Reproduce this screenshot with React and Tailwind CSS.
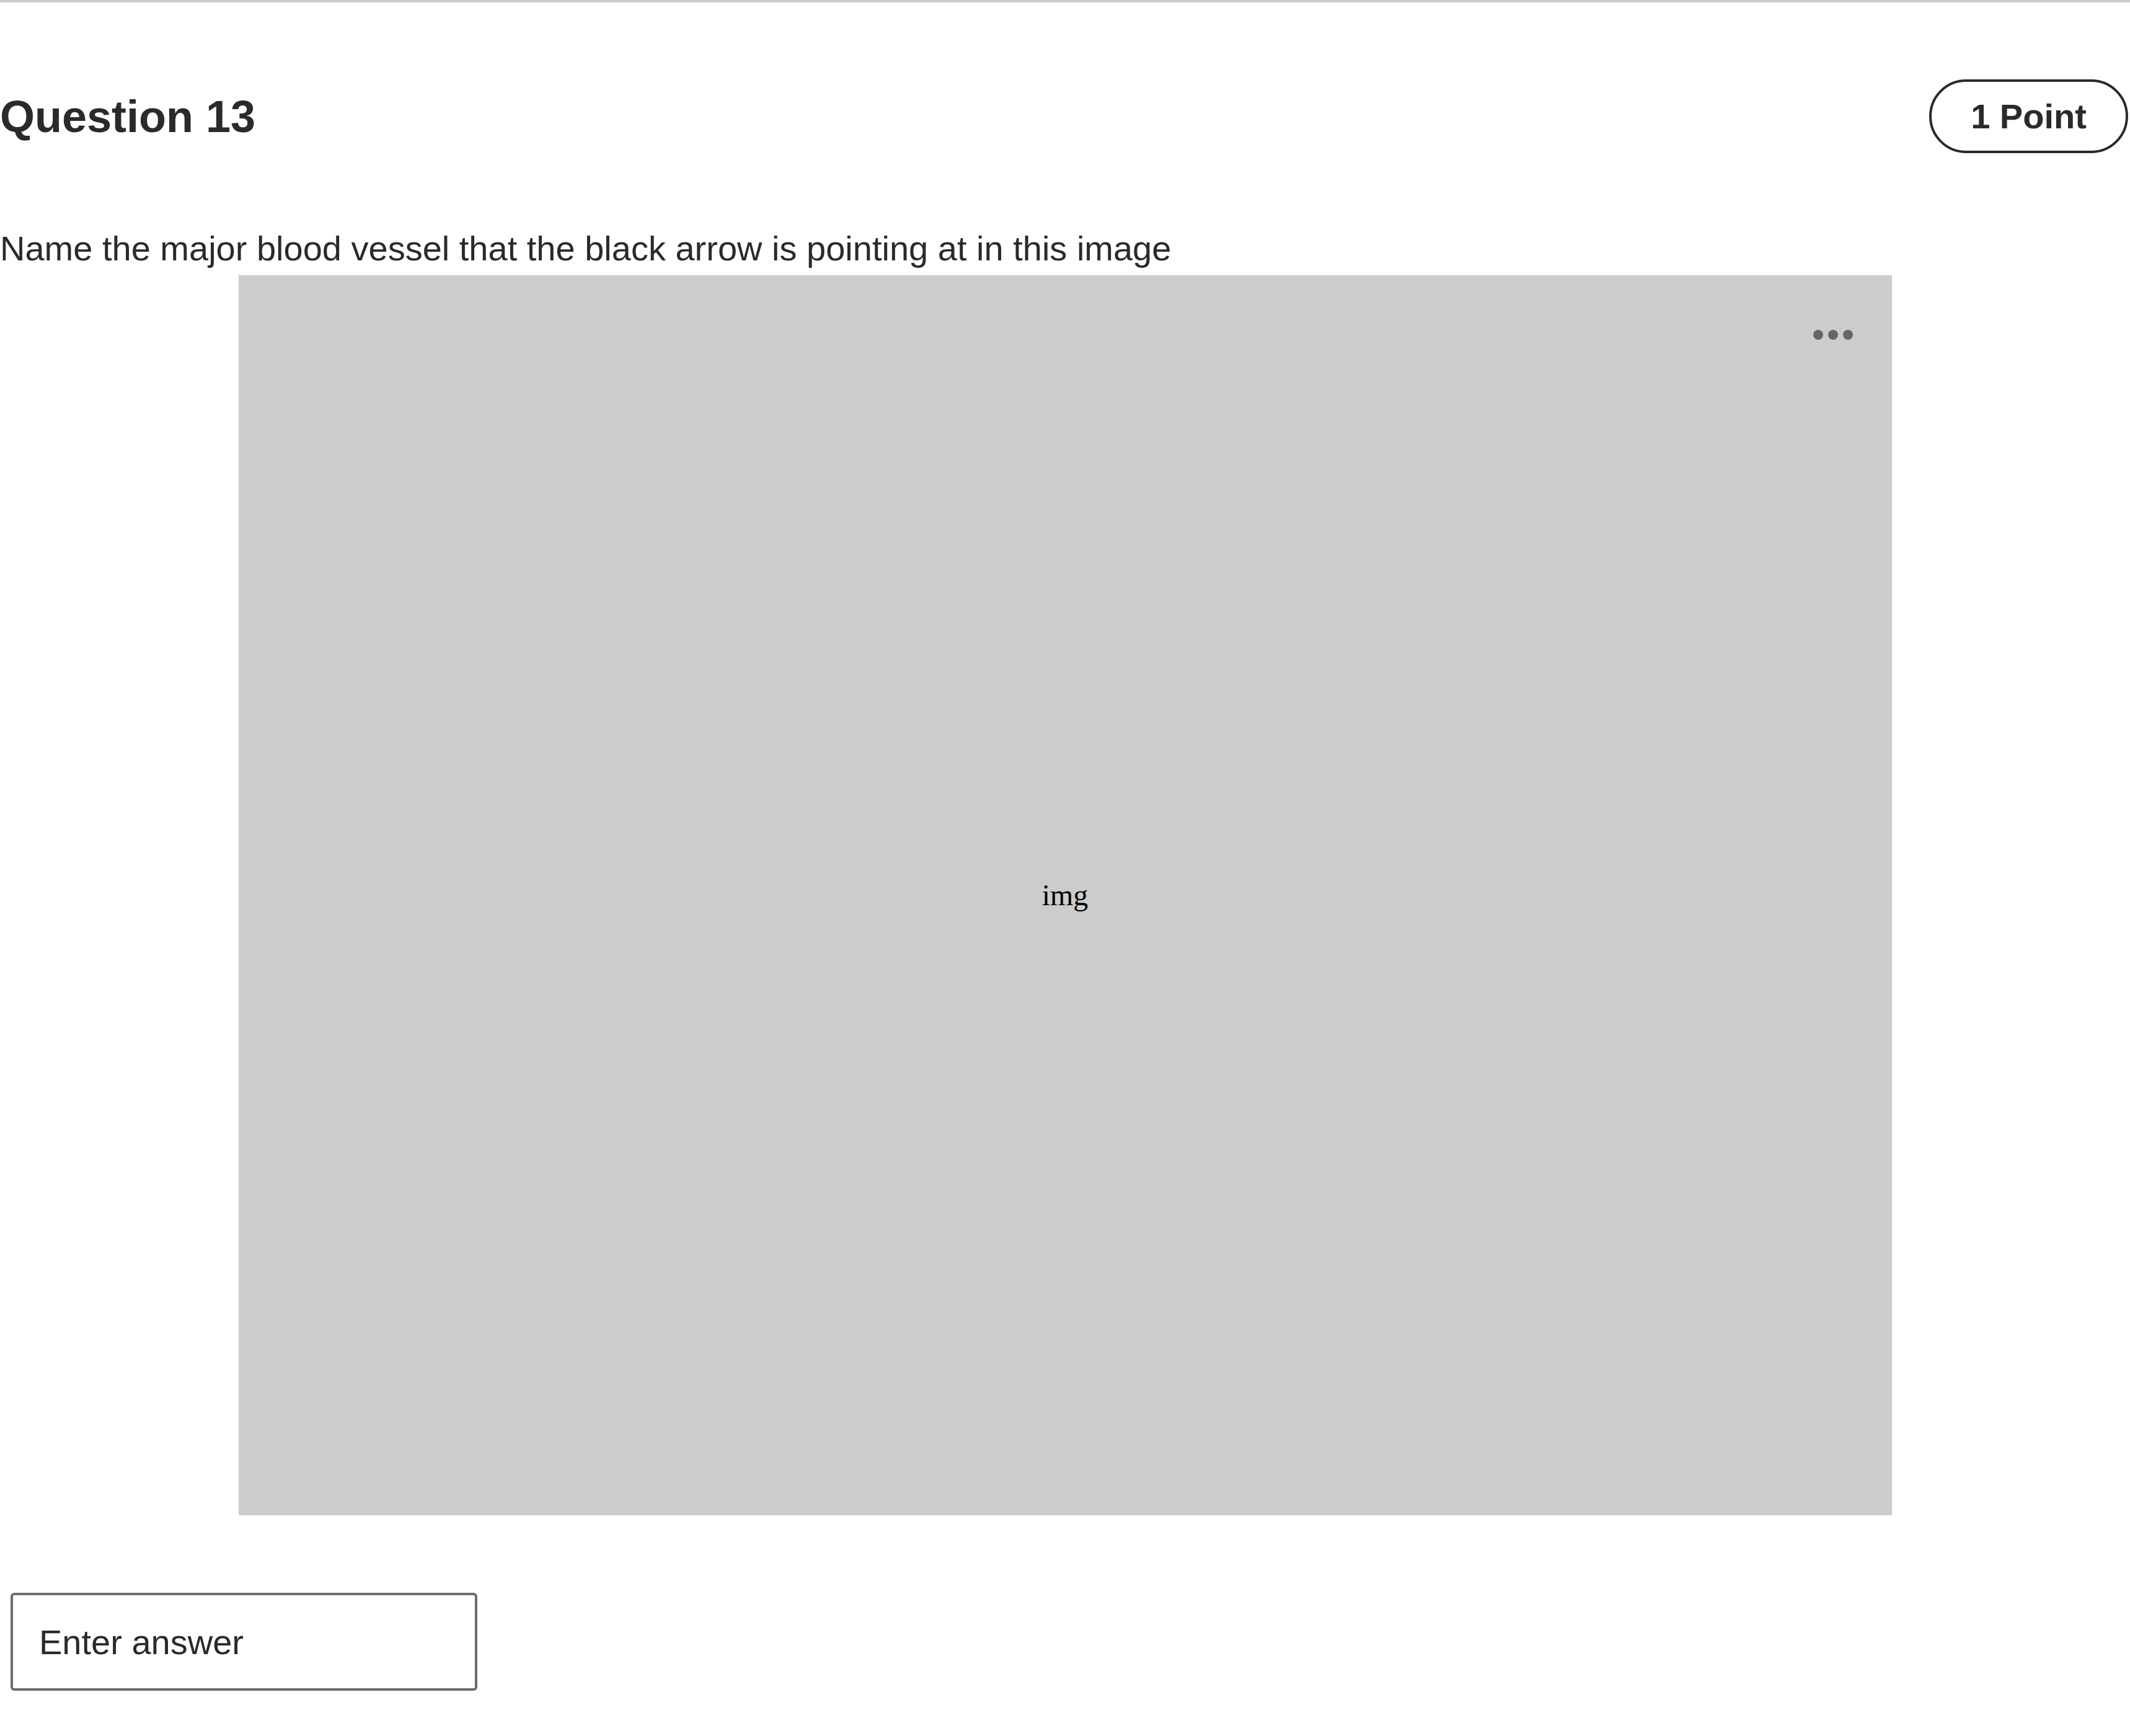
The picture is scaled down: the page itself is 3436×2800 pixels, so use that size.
import { useState } from "react"

// Single quiz question card: heading with point badge, prompt, image slot and a text answer field
const QuestionCard = ({ number, points, prompt }) => {
  const [answer, setAnswer] = useState("")

  return (
    <div className="w-full bg-white border-t-4 border-[#cccccc] font-['Liberation_Sans',Arial,sans-serif] text-[#2a2a2a]">
      <div className="flex justify-between items-center pt-[124px] pr-[3px]">
        <h2 className="text-[72px] leading-[72px] font-bold">Question {number}</h2>
        <div className="flex items-center justify-center w-[321px] h-[119px] border-4 border-[#2a2a2a] rounded-full text-[56px] leading-none font-bold">
          {points} Point
        </div>
      </div>

      <p className="mt-[122px] text-[56px] leading-[64px]">{prompt}</p>

      <div className="relative mt-[11px] mx-auto w-[2667px] h-[2000px] bg-[#cccccc] flex items-center justify-center">
        <span className="font-['Liberation_Serif','Times_New_Roman',serif] text-[48px] text-black">img</span>
        <div className="absolute top-[88px] right-[63px] flex gap-2">
          <span className="w-4 h-4 rounded-full bg-[#666666]" />
          <span className="w-4 h-4 rounded-full bg-[#666666]" />
          <span className="w-4 h-4 rounded-full bg-[#666666]" />
        </div>
      </div>

      <div className="mt-[125px] ml-[17px] pb-[73px]">
        <input
          type="text"
          value={answer}
          onChange={(e) => setAnswer(e.target.value)}
          placeholder="Enter answer"
          className="w-[753px] h-[158px] border-4 border-[#6b6b6b] rounded-[6px] pl-[42px] text-[56px] text-[#2a2a2a] placeholder:text-[#2a2a2a] outline-none"
        />
      </div>
    </div>
  )
}

export default function App() {
  return (
    <QuestionCard
      number={13}
      points={1}
      prompt="Name the major blood vessel that the black arrow is pointing at in this image"
    />
  )
}
